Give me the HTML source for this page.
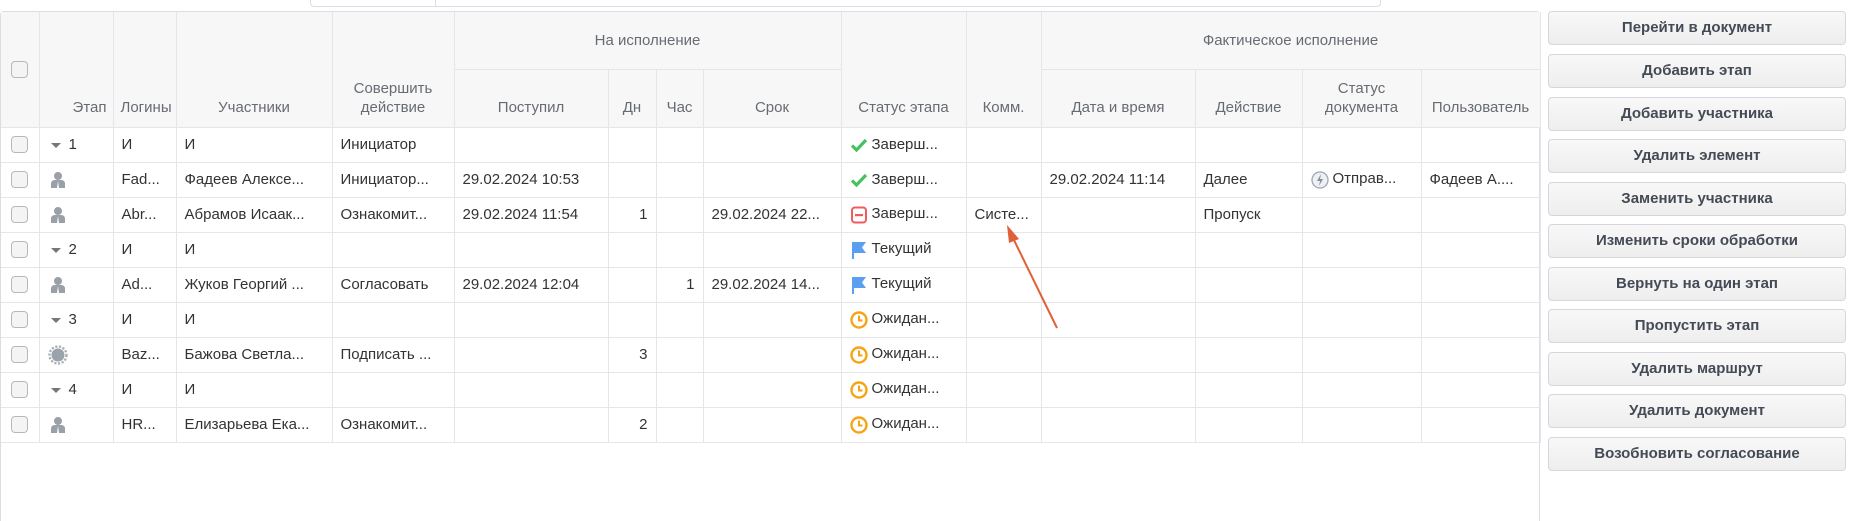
<!DOCTYPE html>
<html><head><meta charset="utf-8"><style>
*{box-sizing:border-box;margin:0;padding:0}
body{width:1856px;height:511px;background:#fff;font-family:"Liberation Sans","DejaVu Sans",sans-serif;position:relative;overflow:hidden;color:#333}
.top{position:absolute;left:310px;top:-10px;width:1071px;height:17px;border:1px solid #dcdce2;border-radius:4px;background:#fff}
.top:after{content:"";position:absolute;left:124px;top:0;bottom:0;border-left:1px solid #dcdce2}
.wrap{position:absolute;left:0;top:11px;width:1540px;height:510px;border-left:1px solid #dcdce4;border-top:1px solid #dcdce4;border-right:1px solid #dcdce4;border-top-left-radius:4px;border-top-right-radius:4px}
table{position:absolute;left:0;top:0;border-collapse:collapse;table-layout:fixed;width:1538px}
th{background:#f7f7f7;color:#676b72;font-weight:normal;font-size:15px;border:1px solid #e6e6ea;border-top:none;vertical-align:bottom;padding:0 4px 10px;text-align:center;line-height:19px;overflow:hidden;white-space:nowrap}
th.g{vertical-align:middle;padding:0;height:57px}
tr.h2 th{height:58px}
td{height:35px;border:1px solid #e6e6ea;font-size:15px;padding:0 8px;white-space:nowrap;overflow:hidden;vertical-align:middle;color:#333}
td:first-child,th:first-child{border-left:none}
td.r{text-align:right}
.cb{display:inline-block;width:17px;height:17px;border:1px solid #b8b8bc;border-radius:4px;background:#f4f4f4;vertical-align:middle}
.ic{display:inline-block;vertical-align:middle;margin-right:4px}
.tri{display:inline-block;width:0;height:0;border-left:5px solid transparent;border-right:5px solid transparent;border-top:5px solid #777;vertical-align:middle;margin:0 8px 0 3px}
.btn{position:absolute;left:1548px;width:298px;height:34px;border:1px solid #d6d6dc;border-radius:4px;background:linear-gradient(#f8f8f8,#eeeeee);font-size:15px;font-weight:bold;color:#444a56;text-align:center;line-height:32px}
</style></head><body>
<div class="top"></div>
<div class="wrap">
<table>
<colgroup><col style="width:38px"><col style="width:74px"><col style="width:63px"><col style="width:156px"><col style="width:122px"><col style="width:154px"><col style="width:48px"><col style="width:47px"><col style="width:138px"><col style="width:125px"><col style="width:75px"><col style="width:154px"><col style="width:107px"><col style="width:119px"><col style="width:119px"></colgroup>
<tr><th rowspan="2" style="vertical-align:middle;padding:0"><span class="cb"></span></th><th rowspan="2" style="text-align:right;padding-right:6px">Этап</th><th rowspan="2" style="text-align:left;padding-left:7px">Логины</th><th rowspan="2">Участники</th><th rowspan="2">Совершить<br>действие</th><th class="g" colspan="4">На исполнение</th><th rowspan="2">Статус этапа</th><th rowspan="2">Комм.</th><th class="g" colspan="4">Фактическое исполнение</th></tr>
<tr class="h2"><th>Поступил</th><th>Дн</th><th>Час</th><th>Срок</th><th>Дата и время</th><th>Действие</th><th>Статус<br>документа</th><th>Пользователь</th></tr>
<tr><td style="padding:0 10px"><span class="cb"></span></td><td><span class="tri"></span>1</td><td>И</td><td>И</td><td>Инициатор</td><td></td><td></td><td></td><td></td><td><svg class="ic" width="18" height="16" viewBox="0 0 18 16"><path d="M2 8.5l4.5 4.5L16 3" stroke="#48c060" stroke-width="3.2" fill="none"/></svg>Заверш...</td><td></td><td></td><td></td><td></td><td></td></tr>
<tr><td style="padding:0 10px"><span class="cb"></span></td><td><svg class="ic" width="16" height="18" viewBox="0 0 16 18" style="margin-left:2px"><circle cx="8" cy="5" r="4" fill="#9aa0a8"/><path d="M1 17v-4q0-4 4-4h6q4 0 4 4v4z" fill="#9aa0a8"/><path d="M8 10l-1 7h2z" fill="#fff"/></svg></td><td>Fad...</td><td>Фадеев Алексе...</td><td>Инициатор...</td><td>29.02.2024 10:53</td><td></td><td></td><td></td><td><svg class="ic" width="18" height="16" viewBox="0 0 18 16"><path d="M2 8.5l4.5 4.5L16 3" stroke="#48c060" stroke-width="3.2" fill="none"/></svg>Заверш...</td><td></td><td>29.02.2024 11:14</td><td>Далее</td><td><svg class="ic" width="18" height="18" viewBox="0 0 18 18"><circle cx="9" cy="9" r="8" fill="#eef0f4" stroke="#a0a6b0" stroke-width="1.3"/><path d="M10 3L6 10h3l-1 5 4-7H9z" fill="#8890a0"/></svg>Отправ...</td><td>Фадеев А....</td></tr>
<tr><td style="padding:0 10px"><span class="cb"></span></td><td><svg class="ic" width="16" height="18" viewBox="0 0 16 18" style="margin-left:2px"><circle cx="8" cy="5" r="4" fill="#9aa0a8"/><path d="M1 17v-4q0-4 4-4h6q4 0 4 4v4z" fill="#9aa0a8"/><path d="M8 10l-1 7h2z" fill="#fff"/></svg></td><td>Abr...</td><td>Абрамов Исаак...</td><td>Ознакомит...</td><td>29.02.2024 11:54</td><td class="r">1</td><td></td><td>29.02.2024 22...</td><td><svg class="ic" width="18" height="18" viewBox="0 0 18 18"><rect x="2" y="1.5" width="14" height="15" rx="3" fill="none" stroke="#f05a5a" stroke-width="2"/><rect x="5" y="8" width="8" height="2.2" fill="#f05a5a"/></svg>Заверш...</td><td>Систе...</td><td></td><td>Пропуск</td><td></td><td></td></tr>
<tr><td style="padding:0 10px"><span class="cb"></span></td><td><span class="tri"></span>2</td><td>И</td><td>И</td><td></td><td></td><td></td><td></td><td></td><td><svg class="ic" width="18" height="18" viewBox="0 0 18 18"><path d="M2 1h14l-4 5.5 4 5.5H4v6H2z" fill="#5a9ff0"/></svg>Текущий</td><td></td><td></td><td></td><td></td><td></td></tr>
<tr><td style="padding:0 10px"><span class="cb"></span></td><td><svg class="ic" width="16" height="18" viewBox="0 0 16 18" style="margin-left:2px"><circle cx="8" cy="5" r="4" fill="#9aa0a8"/><path d="M1 17v-4q0-4 4-4h6q4 0 4 4v4z" fill="#9aa0a8"/><path d="M8 10l-1 7h2z" fill="#fff"/></svg></td><td>Ad...</td><td>Жуков Георгий ...</td><td>Согласовать</td><td>29.02.2024 12:04</td><td></td><td class="r">1</td><td>29.02.2024 14...</td><td><svg class="ic" width="18" height="18" viewBox="0 0 18 18"><path d="M2 1h14l-4 5.5 4 5.5H4v6H2z" fill="#5a9ff0"/></svg>Текущий</td><td></td><td></td><td></td><td></td><td></td></tr>
<tr><td style="padding:0 10px"><span class="cb"></span></td><td><span class="tri"></span>3</td><td>И</td><td>И</td><td></td><td></td><td></td><td></td><td></td><td><svg class="ic" width="18" height="18" viewBox="0 0 18 18"><circle cx="9" cy="9" r="7.5" fill="#fff" stroke="#f7a414" stroke-width="2.4"/><path d="M9 4.5V9.5h3.5" stroke="#f7a414" stroke-width="2" fill="none"/></svg>Ожидан...</td><td></td><td></td><td></td><td></td><td></td></tr>
<tr><td style="padding:0 10px"><span class="cb"></span></td><td><svg class="ic" width="20" height="20" viewBox="0 0 20 20"><circle cx="10" cy="10" r="8.5" fill="none" stroke="#aab0b8" stroke-width="2.4" stroke-dasharray="2.2 1.5"/><circle cx="10" cy="10" r="6.5" fill="#9aa2ac"/></svg></td><td>Baz...</td><td>Бажова Светла...</td><td>Подписать ...</td><td></td><td class="r">3</td><td></td><td></td><td><svg class="ic" width="18" height="18" viewBox="0 0 18 18"><circle cx="9" cy="9" r="7.5" fill="#fff" stroke="#f7a414" stroke-width="2.4"/><path d="M9 4.5V9.5h3.5" stroke="#f7a414" stroke-width="2" fill="none"/></svg>Ожидан...</td><td></td><td></td><td></td><td></td><td></td></tr>
<tr><td style="padding:0 10px"><span class="cb"></span></td><td><span class="tri"></span>4</td><td>И</td><td>И</td><td></td><td></td><td></td><td></td><td></td><td><svg class="ic" width="18" height="18" viewBox="0 0 18 18"><circle cx="9" cy="9" r="7.5" fill="#fff" stroke="#f7a414" stroke-width="2.4"/><path d="M9 4.5V9.5h3.5" stroke="#f7a414" stroke-width="2" fill="none"/></svg>Ожидан...</td><td></td><td></td><td></td><td></td><td></td></tr>
<tr><td style="padding:0 10px"><span class="cb"></span></td><td><svg class="ic" width="16" height="18" viewBox="0 0 16 18" style="margin-left:2px"><circle cx="8" cy="5" r="4" fill="#9aa0a8"/><path d="M1 17v-4q0-4 4-4h6q4 0 4 4v4z" fill="#9aa0a8"/><path d="M8 10l-1 7h2z" fill="#fff"/></svg></td><td>HR...</td><td>Елизарьева Ека...</td><td>Ознакомит...</td><td></td><td class="r">2</td><td></td><td></td><td><svg class="ic" width="18" height="18" viewBox="0 0 18 18"><circle cx="9" cy="9" r="7.5" fill="#fff" stroke="#f7a414" stroke-width="2.4"/><path d="M9 4.5V9.5h3.5" stroke="#f7a414" stroke-width="2" fill="none"/></svg>Ожидан...</td><td></td><td></td><td></td><td></td><td></td></tr>
</table>
</div>
<svg style="position:absolute;left:0;top:0" width="1856" height="511"><line x1="1057" y1="328" x2="1012" y2="236" stroke="#e0603a" stroke-width="2"/><path d="M1007 225l12 14-10 4z" fill="#e0603a"/></svg>
<div class="btn" style="top:11px">Перейти в документ</div>
<div class="btn" style="top:54px">Добавить этап</div>
<div class="btn" style="top:97px">Добавить участника</div>
<div class="btn" style="top:139px">Удалить элемент</div>
<div class="btn" style="top:182px">Заменить участника</div>
<div class="btn" style="top:224px">Изменить сроки обработки</div>
<div class="btn" style="top:267px">Вернуть на один этап</div>
<div class="btn" style="top:309px">Пропустить этап</div>
<div class="btn" style="top:352px">Удалить маршрут</div>
<div class="btn" style="top:394px">Удалить документ</div>
<div class="btn" style="top:437px">Возобновить согласование</div>
</body></html>
